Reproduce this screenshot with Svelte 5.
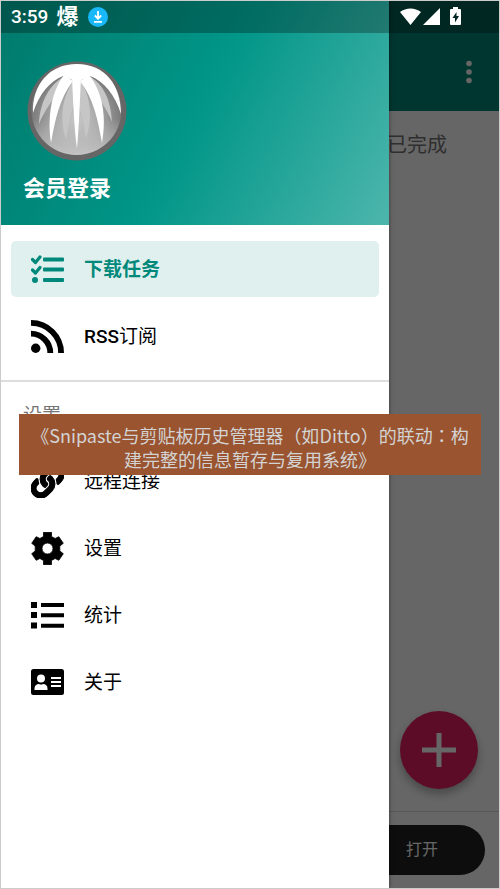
<script>
  const main = [
    { id: 'tasks', label: '下载任务', active: true },
    { id: 'rss', prefix: 'RSS', label: '订阅' }
  ];
  const settings = [
    { id: 'link', label: '远程连接' },
    { id: 'gear', label: '设置' },
    { id: 'stats', label: '统计' },
    { id: 'about', label: '关于' }
  ];
</script>

{#snippet icon(id)}
  {#if id === 'tasks'}
    <svg viewBox="0 0 33 28" aria-hidden="true" fill="currentColor">
      <path d="M1.500 4.500l3 3 4.500-5.500M1.500 15l3 3 4.500-5.500" fill="none" stroke="currentColor" stroke-width="3.200" stroke-linecap="round" stroke-linejoin="round" />
      <circle cx="4" cy="25" r="3" />
      <rect x="12" y="2.5" width="21" height="4" rx="1" />
      <rect x="12" y="12.5" width="21" height="4" rx="1" />
      <rect x="12" y="23" width="21" height="4" rx="1" />
    </svg>
  {:else if id === 'rss'}
    <svg viewBox="0 0 33 33" aria-hidden="true">
      <circle cx="4.700" cy="28.300" r="4.700" fill="currentColor" />
      <path d="M0 13.700A19.300 19.300 0 0 1 19.300 33M0 2.900A30.100 30.100 0 0 1 30.100 33" fill="none" stroke="currentColor" stroke-width="5.800" />
    </svg>
  {:else if id === 'link'}
    <svg viewBox="0 0 512 512" aria-hidden="true" fill="currentColor" stroke="currentColor" stroke-width="16">
      <path d="M326.612 185.391c59.747 59.809 58.927 155.698.36 214.59-.11.12-.24.25-.36.37l-67.2 67.2c-59.27 59.27-155.699 59.262-214.96 0-59.27-59.26-59.27-155.7 0-214.96l37.106-37.106c9.84-9.84 26.786-3.3 27.294 10.606.648 17.722 3.826 35.527 9.69 52.721 1.986 5.822.567 12.262-3.783 16.612l-13.087 13.087c-28.026 28.026-28.905 73.66-1.155 101.96 28.024 28.579 74.086 28.749 102.325.51l67.2-67.19c28.191-28.191 28.073-73.757 0-101.83-3.701-3.694-7.429-6.564-10.341-8.569a16.037 16.037 0 0 1-6.947-12.606c-.396-10.567 3.348-21.456 11.698-29.806l21.054-21.055c5.521-5.521 14.182-6.199 20.584-1.731a152.482 152.482 0 0 1 20.522 17.197zM467.547 44.449c-59.261-59.262-155.69-59.27-214.96 0l-67.2 67.2c-.12.12-.25.25-.36.37-58.566 58.892-59.387 154.781.36 214.59a152.454 152.454 0 0 0 20.521 17.196c6.402 4.468 15.064 3.789 20.584-1.731l21.054-21.055c8.35-8.35 12.094-19.239 11.698-29.806a16.037 16.037 0 0 0-6.947-12.606c-2.912-2.005-6.64-4.875-10.341-8.569-28.073-28.073-28.191-73.639 0-101.83l67.2-67.19c28.239-28.239 74.3-28.069 102.325.51 27.75 28.3 26.872 73.934-1.155 101.96l-13.087 13.087c-4.35 4.35-5.769 10.79-3.783 16.612 5.864 17.194 9.042 34.999 9.69 52.721.509 13.906 17.454 20.446 27.294 10.606l37.106-37.106c59.271-59.259 59.271-155.699.001-214.959z" />
    </svg>
  {:else if id === 'gear'}
    <svg viewBox="0 0 33 33" aria-hidden="true" fill="currentColor">
      <path fill-rule="evenodd" d="M12.500 .3h8v4.200l3.600 2 3.700-1.800 4.500 6.600-3.500 2.700v5l3.500 2.700-4.500 6.600-3.700-1.800-3.600 2v4.200h-8v-4.200l-3.600-2-3.700 1.800L.7 21.700 4.200 19v-5L.7 11.300l4.500-6.600 3.700 1.800 3.600-2zM16.500 11a5.500 5.500 0 1 0 0 11a5.500 5.500 0 1 0 0-11z" stroke="currentColor" stroke-width=".8" stroke-linejoin="round" />
    </svg>
  {:else if id === 'stats'}
    <svg viewBox="0 0 33 28" aria-hidden="true" fill="currentColor">
      <path d="M0 1h6v6H0zM0 11h6v6H0zM0 21.500h6v6H0z" />
      <path d="M10 2h23v4H10zM10 12.300h23v4H10zM10 22.800h23v4H10z" />
    </svg>
  {:else}
    <svg viewBox="0 0 33 26" aria-hidden="true">
      <rect width="33" height="26" rx="2.500" fill="currentColor" />
      <g fill="#fff">
        <circle cx="10" cy="9.500" r="4" />
        <path d="M3.500 21v-1.500c0-3 2-4.500 4.500-4.500 1.400.8 2.800.8 4 0 2.600 0 4.500 1.500 4.500 4.500V21zM20 8h10v2H20zM20 12h10v2H20zM20 16h10v2H20z" />
      </g>
    </svg>
  {/if}
{/snippet}

{#snippet menu(items)}
  <ul>
    {#each items as item (item.id)}
      <li>
        <a href="#{item.id}" class:active={item.active}>
          <span class="icon">{@render icon(item.id)}</span>
          <span class="label">{#if item.prefix}<b>{item.prefix}</b>{/if}{item.label}</span>
        </a>
      </li>
    {/each}
  </ul>
{/snippet}

<div class="screen">
  <main class="page">
    <header class="appbar">
      <button class="more" aria-label="更多">
        <svg viewBox="0 0 6 24" aria-hidden="true" fill="currentColor">
          <circle cx="3" cy="3.500" r="2.800" /><circle cx="3" cy="12" r="2.800" /><circle cx="3" cy="20.500" r="2.800" />
        </svg>
      </button>
    </header>
    <div class="tabs"><a href="#done">已完成</a></div>
    <div class="content">
      <button class="fab" aria-label="添加">
        <svg viewBox="0 0 34 34" aria-hidden="true"><path d="M17 0v34M0 17h34" stroke="currentColor" stroke-width="5" /></svg>
      </button>
    </div>
    <footer><button class="open">打开</button></footer>
  </main>
  <div class="scrim"></div>

  <aside class="drawer">
    <div class="profile">
      <svg class="avatar" viewBox="0 0 100 100" aria-hidden="true">
        <defs>
          <radialGradient id="ball" cx=".5" cy=".6" r=".55">
            <stop offset="0" stop-color="#c8c8c8" /><stop offset=".5" stop-color="#a4a4a4" /><stop offset="1" stop-color="#707070" />
          </radialGradient>
          <linearGradient id="base" x1="0" y1="0" x2="0" y2="1">
            <stop offset=".6" stop-color="#ccc" stop-opacity="0" /><stop offset="1" stop-color="#c4c4c4" />
          </linearGradient>
        </defs>
        <circle cx="50" cy="50" r="49.500" fill="#666" />
        <circle cx="49.500" cy="49" r="45" fill="url(#ball)" />
        <circle cx="49.500" cy="49" r="45" fill="url(#base)" />
        <g fill="#c6c6c6">
          <path d="M40 14C23 22 13 40 12 63C18 48 26 40 32 28zM60 14C77 22 84 40 85 61C80 48 73 40 67 28z" />
          <path d="M46 20C34 38 33 60 39 78C42 65 42 52 49 40C56 52 57 65 59 78C65 60 65 38 54 20z" />
        </g>
        <g fill="#fff">
          <path d="M50 3C22 3 5 24 6 52C12 33 23 20 36 15L50 21L63 15C77 20 88 34 94 53C94 24 78 3 50 3z" />
          <path d="M37 14C25 30 20 54 24 82C28 60 32 38 46 20zM62 14C75 30 80 54 75 82C71 60 67 38 53 20z" />
          <path d="M45 16C46 38 47 65 50 88C52 65 53 38 54 16z" />
        </g>
      </svg>
      <a class="login" href="#login">会员登录</a>
    </div>
    <nav>
      {@render menu(main)}
      <hr />
      <h2>设置</h2>
      {@render menu(settings)}
    </nav>
  </aside>

  <div class="status">
    <span>3:59</span>
    <span class="burst">爆</span>
    <svg class="download" viewBox="0 0 20 20" aria-hidden="true">
      <circle cx="10" cy="10" r="10" fill="#18b8fa" />
      <path d="M10 4v7.500M6.800 8.500l3.200 3.200 3.200-3.200M6 14.800h8" stroke="#fff" stroke-width="1.800" fill="none" />
    </svg>
    <span class="space"></span>
    <svg class="signals" viewBox="0 0 62 20" aria-hidden="true" fill="#fff">
      <path d="M0 5C6 .2 15 .2 21 5L10.500 18zM23 18L40 1v17z" />
      <path fill-rule="evenodd" d="M53 0h5v2h2q1 0 1 1v14q0 1-1 1h-9q-1 0-1-1V3q0-1 1-1h2zM56.500 5L52.500 11h2.500v4.500l4-6.500h-2.500z" />
    </svg>
  </div>

  <p class="banner">《Snipaste与剪贴板历史管理器（如Ditto）的联动：构建完整的信息暂存与复用系统》</p>
</div>

<style>
  .screen {
    position: relative;
    box-sizing: border-box;
    min-height: 100vh;
    border: 1px solid #ccc;
    background: #fff;
    font-family: Roboto, "Noto Sans CJK SC", sans-serif;
    font-size: 19px;
    line-height: 28px;
    color: #000;
    display: flex;
    overflow: hidden;
  }
  button { border: 0; padding: 0; font: inherit; cursor: pointer; }
  a { color: inherit; text-decoration: none; }
  svg { display: block; }

  .page { flex: 1; display: flex; flex-direction: column; }
  .appbar {
    height: 78px;
    padding: 32px 27px 0;
    display: flex;
    justify-content: flex-end;
    align-items: center;
    background: #008878;
  }
  .more { background: none; color: #fff; }
  .more svg { width: 6px; height: 24px; }
  .tabs { padding: 20px 52px; text-align: right; font-size: 20px; color: #757575; }
  .content { flex: 1; display: flex; justify-content: flex-end; align-items: flex-end; padding: 0 21px 22px; }
  .fab {
    width: 78px;
    height: 78px;
    border-radius: 50%;
    display: grid;
    place-items: center;
    background: #e91e63;
    color: #fff;
    box-shadow: 0 5px 10px rgb(0 0 0 / 30%);
  }
  .fab svg { width: 34px; height: 34px; }
  footer { padding: 13px 14px; border-top: 1px solid #ddd; }
  .open {
    width: 100%;
    height: 50px;
    border-radius: 25px;
    background: #222;
    color: #fff;
    font-size: 16px;
    text-align: right;
    padding: 0 47px;
  }
  .scrim { position: absolute; inset: 0; background: rgb(0 0 0 / 60%); }

  .drawer {
    position: absolute;
    inset: 0 auto 0 0;
    width: 78%;
    background: #fff;
    box-shadow: 0 0 4px rgb(0 0 0 / 50%);
  }
  .profile {
    padding: 60px 22px 20px 22px;
    background: linear-gradient(118deg, #00796b, #009688 50%, #4db6ac);
    color: #fff;
  }
  .avatar { width: 100px; height: 100px; margin: 0 4px 12px; }
  .login { display: block; font-size: 22px; line-height: 32px; font-weight: 700; }
  nav { padding-top: 16px; }
  ul { list-style: none; margin: 0; padding: 0 10px; display: grid; gap: 11px; }
  li a {
    height: 56px;
    padding: 0 20px;
    display: flex;
    align-items: center;
    gap: 20px;
    border-radius: 5px;
  }
  li a.active { background: #e0f0ee; color: #00897b; font-weight: 700; }
  .label { padding-top: 2px; }
  .label b { font-weight: 500; }
  .icon { width: 33px; }
  .icon svg { width: 100%; }
  hr { margin: 16px 0 0; border: 0; border-top: 2px solid #ddd; }
  h2 { margin: 20px 22px 23px; font-size: 19px; line-height: 28px; font-weight: 400; color: #757575; }

  .status {
    position: absolute;
    inset: 0 0 auto;
    height: 32px;
    padding: 0 37px 0 10px;
    display: flex;
    align-items: center;
    background: rgb(0 0 0 / 28%);
    color: #fff;
    font-weight: 500;
  }
  .burst { margin: 0 10px 0 8px; font-size: 22px; font-weight: 700; }
  .download { width: 20px; height: 20px; }
  .space { flex: 1; }
  .signals { width: 62px; height: 20px; }

  .banner {
    position: absolute;
    top: 413px;
    left: 18px;
    right: 18px;
    margin: 0;
    padding: 9px 10px 4px;
    background: #9a5430;
    color: #d3d3d3;
    font: 18px/24px "Noto Sans CJK TC", "Noto Sans CJK SC", sans-serif;
    text-align: center;
  }
</style>
